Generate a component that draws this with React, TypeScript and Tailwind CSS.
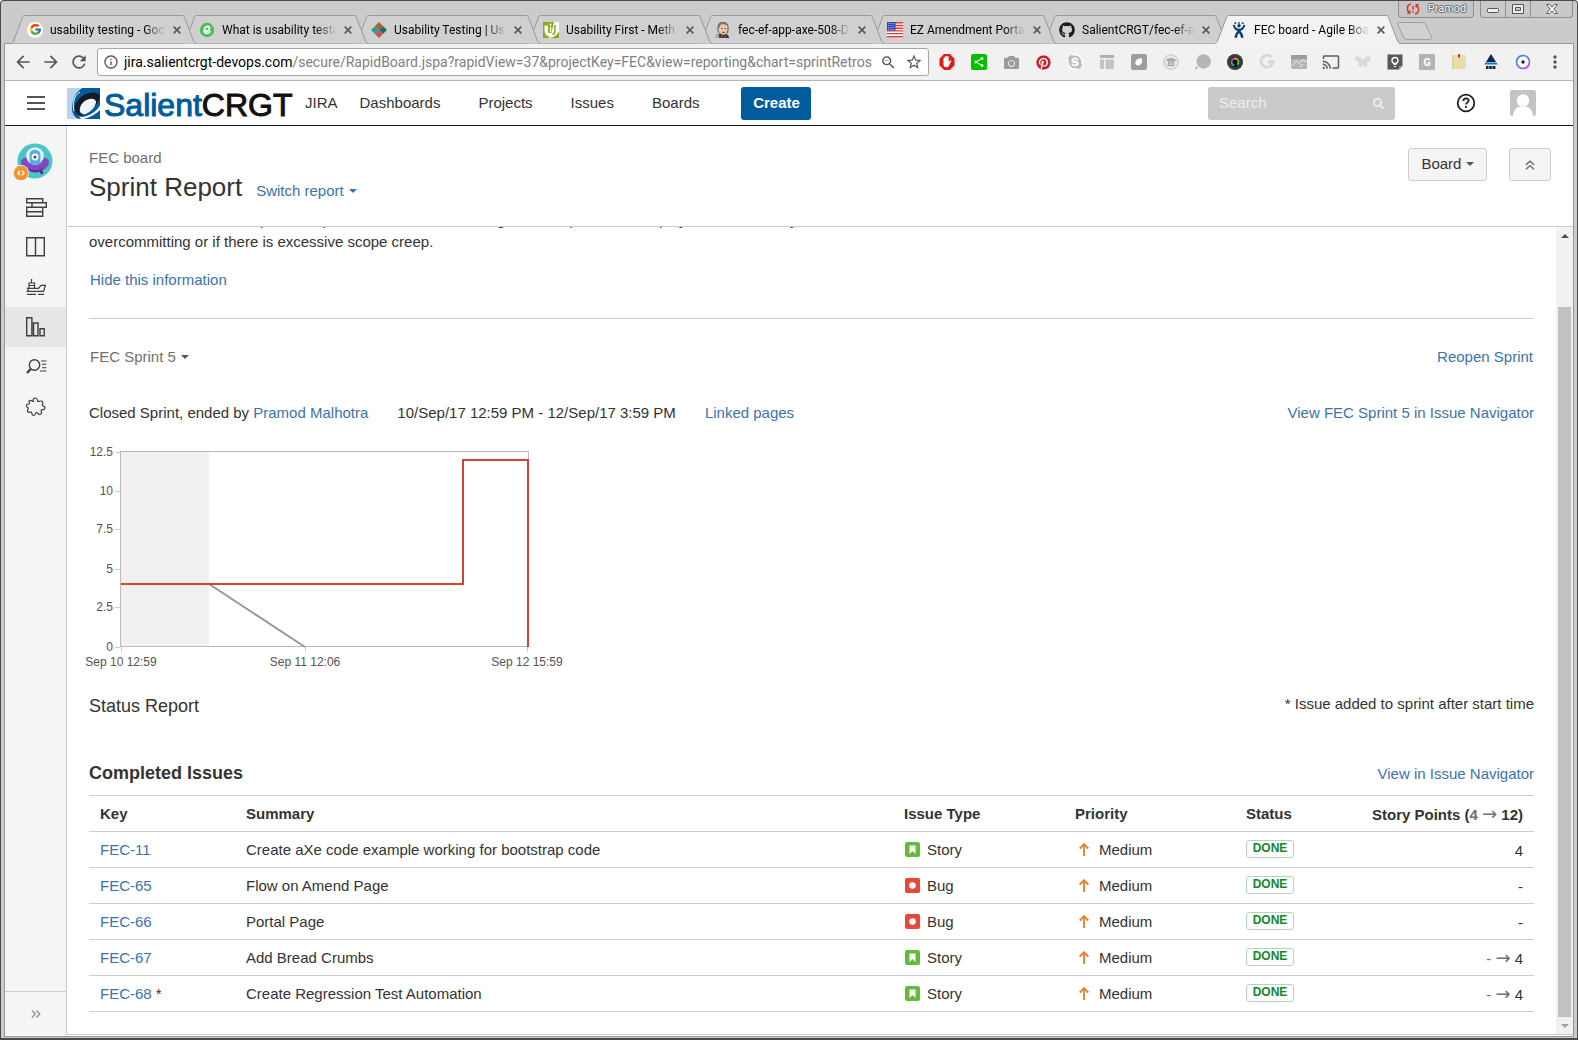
import React from "react";
import { FcGoogle } from "react-icons/fc";
import { FaGithub, FaPinterest, FaSkype, FaCamera, FaSearch } from "react-icons/fa";
import {
  MdArrowBack,
  MdArrowForward,
  MdRefresh,
  MdInfoOutline,
  MdStarBorder,
  MdZoomOut,
  MdCast,
  MdShare,
  MdMoreVert,
} from "react-icons/md";

/* ---------- tab icons ---------- */

const EIcon = () => (
  <svg viewBox="0 0 16 16" className="size-4">
    <circle cx="8" cy="8" r="7.2" fill="#4ebd55" />
    <path d="M5 9.200c3.200.2 5.600-.9 5.600-2.800 0-1.200-.9-1.900-2-1.900-1.900 0-3.300 2-3.300 4 0 1.800 1 2.900 2.600 2.900 1.200 0 2.300-.6 3.100-1.600" fill="none" stroke="#fff" strokeWidth="1.800" strokeLinecap="round" />
  </svg>
);

const DiamondIcon = () => (
  <svg viewBox="0 0 16 16" className="size-4">
    <path d="M8 0l4 4-4 4-4-4z" fill="#a9642c" />
    <path d="M4 4l4 4-4 4-4-4z" fill="#2b9a9a" />
    <path d="M12 4l4 4-4 4-4-4z" fill="#1f6f78" />
    <path d="M8 8l4 4-4 4-4-4z" fill="#c65252" />
  </svg>
);

const UFirstIcon = () => (
  <svg viewBox="0 0 16 16" className="size-4">
    <rect width="16" height="16" fill="#86ab1d" />
    <path d="M11 0h5v10c-1 3-4 5-7 5.500L6 16h-.500L8 13z" fill="#fff" />
    <path d="M16 9v7H7c4-.5 7.500-3 9-7z" fill="#86ab1d" />
    <path d="M3.200 3.500v5c0 2.800 1.500 4.300 4.300 4.300s4.300-1.500 4.300-4.300v-5" fill="none" stroke="#fff" strokeWidth="3.400" />
    <path d="M12 3v5.500c0 2-.8 3.600-2.400 4.200" fill="none" stroke="#86ab1d" strokeWidth="1.500" />
    <path d="M7.500 5v5" stroke="#fff" strokeWidth="1.400" />
    <circle cx="7.500" cy="2.700" r="1.100" fill="#fff" />
  </svg>
);

const JenkinsIcon = () => (
  <svg viewBox="0 0 16 16" className="size-4">
    <path d="M2 16c0-3 2-4.500 6-4.500s6 1.500 6 4.500z" fill="#30384a" />
    <path d="M3 5c0-3 2-5 5-5s5 2 5 5v3c0 3-2 5-4.500 5S3 11 3 8z" fill="#e9c9a8" stroke="#4a3b33" strokeWidth=".8" />
    <path d="M3 5C3 2 5 0 8 0s5 2 5 4c-2-1.500-5-2-7-1.500C5 3.500 5 5 4.500 6z" fill="#7d746c" />
    <path d="M6 6.500h1.500M9.500 6.500H11M7 10c1 .6 2.300.6 3 0" stroke="#4a3b33" strokeWidth=".9" />
    <path d="M6 13l2.500 1.200L11 13v3l-2.500-1.200L6 16z" fill="#c8292b" />
    <path d="M1 16c0-2.500.5-3.500 2-4l1.500 4z" fill="#c9c9c9" stroke="#555" strokeWidth=".5" />
  </svg>
);

const FlagIcon = () => (
  <svg viewBox="0 0 16 16" className="size-4">
    <rect width="16" height="16" fill="#fff" />
    <path d="M0 .8h16M0 3.500h16M0 6.200h16M0 8.900h16M0 11.600h16M0 14.700h16" stroke="#e03c31" strokeWidth="1.400" />
    <rect width="8.500" height="8.500" fill="#2b45b8" />
    <path d="M1 1.500h7M1 3.500h7M1 5.500h7M1 7.300h7" stroke="#fff" strokeWidth=".7" strokeDasharray=".8 1" />
  </svg>
);

const JiraManIcon = () => (
  <svg viewBox="0 0 16 16" className="size-4">
    <g fill="#0f3d73">
      <circle cx="8" cy="3.800" r="1.700" />
      <circle cx="4.300" cy="1.300" r="1" />
      <circle cx="8" cy=".9" r=".9" />
      <circle cx="11.700" cy="1.300" r="1" />
      <path d="M1.800 2.800c.2 3 1.800 5.200 4.800 6.200-1.400 1.500-3 3.700-3.100 6.600l2.500.4c.1-2 .9-3.700 2-5 1.100 1.300 1.900 3 2 5l2.500-.4c-.1-2.900-1.700-5.100-3.100-6.600 3-1 4.600-3.200 4.800-6.200l-2 .1c-.3 2-1.700 3.600-4.200 3.900C5.500 6.500 4.100 4.900 3.800 2.900z" />
    </g>
  </svg>
);

const tabs: { title: string; icon: React.ReactNode; active?: boolean }[] = [
  {
    title: "usability testing - Goo",
    icon: (
      <span className="flex size-4 items-center justify-center rounded-full bg-white">
        <FcGoogle size={13} />
      </span>
    ),
  },
  { title: "What is usability testi", icon: <EIcon /> },
  { title: "Usability Testing | Us", icon: <DiamondIcon /> },
  { title: "Usability First - Meth", icon: <UFirstIcon /> },
  { title: "fec-ef-app-axe-508-D", icon: <JenkinsIcon /> },
  { title: "EZ Amendment Porta", icon: <FlagIcon /> },
  { title: "SalientCRGT/fec-ef-a", icon: <FaGithub size={16} color="#1b1b1b" /> },
  { title: "FEC board - Agile Boa", icon: <JiraManIcon />, active: true },
];

function Tab({ title, icon, active, order }: { title: string; icon: React.ReactNode; active?: boolean; order: number }) {
  return (
    <div
      className="relative -mr-[13px] -mb-px flex h-[29px] w-[185px] shrink-0 items-center pr-[18px] pl-4"
      style={{ zIndex: active ? 20 : 10 - order }}
    >
      <svg viewBox="0 0 185 29" className="absolute inset-0 h-full w-full" aria-hidden="true">
        <path
          d="M0 28.500C1.500 28 2 27 2.500 26L11.500 2.500C12 1 12.500.5 14 .5H171C172.500.5 173 1 173.500 2.500L182.500 26C183 27 183.500 28 185 28.500"
          fill={active ? "#f2f2f2" : "#d0d0d0"}
          stroke="#989898"
        />
        {active && <path d="M1 28.500H184" stroke="#f2f2f2" />}
      </svg>
      <span className="relative flex size-4 shrink-0 items-center justify-center">{icon}</span>
      <button
        type="button"
        className="relative ml-[7px] flex-1 text-left text-xs leading-4 whitespace-nowrap text-black [mask-image:linear-gradient(to_right,black_82%,transparent)]"
      >
        {title}
      </button>
      <button type="button" aria-label={`Close ${title}`} className="relative ml-2 shrink-0">
        <svg viewBox="0 0 8 8" className="size-2">
          <path d="M.7.7l6.600 6.600M7.300.7L.7 7.300" stroke="#5a5a5a" strokeWidth="1.700" />
        </svg>
      </button>
    </div>
  );
}

function WindowControls() {
  return (
    <div className="absolute top-0 right-px flex items-start gap-[6px] text-[11px]">
      <button
        type="button"
        className="flex h-[17px] w-[76px] items-center justify-center gap-2 rounded-b border border-t-0 border-[#8f8f8f] bg-[#c6c6c6] text-white [text-shadow:1px_0_#666,-1px_0_#666,0_1px_#666,0_-1px_#666]"
      >
        <svg viewBox="0 0 14 12" className="h-3 w-[14px]" fill="none" stroke="#d23f31" strokeWidth="1.600">
          <path d="M5 1C2 1.500 1 4 1.500 6.500c.2 1.200.8 2.200 1.800 3M1.200 10.500l2.600-.4V7.500M9 11c3-.5 4-3 3.500-5.500-.2-1.200-.8-2.200-1.800-3M12.800 1.500l-2.600.4v2.600M7 3v3.500M7 8v1.500" />
        </svg>
        Pramod
      </button>
      <div className="flex h-[17px] divide-x divide-[#8f8f8f] rounded-b border border-t-0 border-[#8f8f8f] bg-[#c9c9c9]">
        <button type="button" aria-label="Minimize" className="flex w-[25px] items-center justify-center">
          <svg viewBox="0 0 12 10" className="h-[10px] w-3">
            <rect x=".5" y="4.500" width="11" height="4" rx="1" fill="#eee" stroke="#555" />
          </svg>
        </button>
        <button type="button" aria-label="Restore" className="flex w-[25px] items-center justify-center">
          <svg viewBox="0 0 12 10" className="h-[10px] w-3">
            <path d="M.5.5h11v9H.5zM3.500 3.500v3h5v-3z" fill="#eee" fillRule="evenodd" stroke="#555" />
          </svg>
        </button>
        <button type="button" aria-label="Close window" className="flex w-[41px] items-center justify-center">
          <svg viewBox="0 0 12 10" className="h-[10px] w-3">
            <path d="M.5.5h3L6 3 8.500.5h3L8 5l3.500 4.500h-3L6 7 3.500 9.500h-3L4 5z" fill="#eee" stroke="#555" strokeWidth=".9" />
          </svg>
        </button>
      </div>
    </div>
  );
}

/* ---------- extension icons ---------- */

const extensions: { name: string; icon: React.ReactNode }[] = [
  {
    name: "Ad blocker",
    icon: (
      <svg viewBox="0 0 16 16" className="size-4">
        <path d="M5 0h6l4.500 4.800v6.400L11 16H5L.5 11.200V4.800z" fill="#e01b1b" />
        <path d="M4.500 8.500V4.200c0-.9 1.200-.9 1.200 0V3c0-1 1.300-1 1.300 0v-.6c0-1 1.400-1 1.400 0V3c0-.9 1.300-.9 1.300 0v5l1.200-1.300c.8-.7 1.700 0 1.200.9l-2.300 4.200c-.5 1-1.100 1.500-2.400 1.500-2 0-2.900-1.300-2.900-3z" fill="#fff" />
      </svg>
    ),
  },
  {
    name: "Share",
    icon: (
      <span className="flex size-4 items-center justify-center rounded-[2px] bg-[#00c100]">
        <MdShare size={12} color="#fff" />
      </span>
    ),
  },
  { name: "Screenshot", icon: <FaCamera size={15} color="#9b9b9b" /> },
  { name: "Pinterest", icon: <FaPinterest size={15} color="#cb2027" className="rounded-full bg-white" /> },
  { name: "Skype", icon: <FaSkype size={16} color="#bdbdbd" className="rounded-full bg-white" /> },
  {
    name: "Layout",
    icon: (
      <svg viewBox="0 0 16 16" className="size-4" fill="#c4c4c4">
        <path d="M1 1h14v3H1zM1 5.500h4V15H1zM6.500 5.500H15V15H6.500z" />
        <path d="M1 1h14v3H1z" fill="#b0b0b0" />
      </svg>
    ),
  },
  {
    name: "Drop",
    icon: (
      <svg viewBox="0 0 16 16" className="size-4">
        <rect width="16" height="16" rx="2" fill="#9d9d9d" />
        <path d="M10.800 4.200c1 3-.2 7.300-3.800 7.300-2 0-3-1.500-2.600-3.500C5 5.200 8 3.800 10.800 4.200z" fill="#fff" />
      </svg>
    ),
  },
  {
    name: "Phone",
    icon: (
      <svg viewBox="0 0 16 16" className="size-4" fill="none" stroke="#c4c4c4">
        <circle cx="8" cy="8" r="7.300" fill="#e6e6e6" />
        <path d="M3.500 6.500c1-2.500 8-2.500 9 0l-2 .5-.5-1h-4l-.5 1z" fill="#999" stroke="#999" strokeWidth=".6" />
        <path d="M5 11.500l1-4h4l1 4z" stroke="#999" strokeWidth="1" />
        <circle cx="8" cy="9.500" r=".9" stroke="#999" strokeWidth=".8" />
      </svg>
    ),
  },
  {
    name: "Bubble",
    icon: (
      <svg viewBox="0 0 16 16" className="size-4" fill="#b6b6b6">
        <circle cx="8.700" cy="7.500" r="7.200" />
        <circle cx="1.500" cy="14" r="1.300" />
      </svg>
    ),
  },
  {
    name: "Color picker",
    icon: (
      <svg viewBox="0 0 16 16" className="size-4" fill="none">
        <circle cx="8" cy="8" r="8" fill="#3c3c40" />
        <circle cx="8" cy="8" r="5" fill="#111" />
        <path d="M4.500 8A3.500 3.500 0 0 1 7 4.700" stroke="#b83be0" strokeWidth="1.800" />
        <path d="M7 4.700a3.500 3.500 0 0 1 3.800 1.200" stroke="#f2a51d" strokeWidth="1.800" />
        <path d="M10.800 5.900a3.500 3.500 0 0 1-.6 4.800" stroke="#49c93c" strokeWidth="1.800" />
        <path d="M4.500 8a3.500 3.500 0 0 0 2.800 3.400" stroke="#26a8d8" strokeWidth="1.800" />
      </svg>
    ),
  },
  {
    name: "Google",
    icon: (
      <svg viewBox="0 0 16 16" className="size-4">
        <path d="M12.800 3.500A6 6 0 1 0 14 8H8.500" fill="none" stroke="#d6d6d6" strokeWidth="2.800" />
      </svg>
    ),
  },
  {
    name: "Gallery",
    icon: (
      <svg viewBox="0 0 16 16" className="size-4">
        <path d="M0 1h16v14H1v-1H0z" fill="#b5b5b5" />
        <path d="M0 1h16v4H0z" fill="#9c9c9c" />
        <path d="M1 12l4-5 3 2 4-3 4 2M9 13l3-3" stroke="#dcdcdc" strokeWidth="1.200" fill="none" />
      </svg>
    ),
  },
  { name: "Cast", icon: <MdCast size={18} color="#5f5f5f" className="shrink-0" /> },
  {
    name: "Butterfly",
    icon: (
      <svg viewBox="0 0 16 16" className="size-4" fill="#d9d9d9">
        <path d="M8 6C6 3 3 2 0 2.500c.3 3 1.500 5 4 6-1 1.500-.8 3.500.8 4.500C6.500 13.500 7.500 12 8 10c.5 2 1.500 3.500 3.200 3 1.600-1 1.800-3 .8-4.500 2.500-1 3.700-3 4-6C13 2 10 3 8 6z" />
      </svg>
    ),
  },
  {
    name: "Notes",
    icon: (
      <svg viewBox="0 0 16 16" className="size-4">
        <path d="M.5.500h15V12L12 15.500H.5z" fill="#575757" />
        <path d="M12 15.500V12h3.500z" fill="#9a9a9a" />
        <circle cx="8" cy="6.500" r="3" fill="none" stroke="#fff" strokeWidth="1.300" />
        <path d="M6.500 10.500h3M7 12.500h2" stroke="#fff" strokeWidth="1.200" />
      </svg>
    ),
  },
  {
    name: "Grammar",
    icon: <span className="flex size-4 items-center justify-center bg-[#b3b3b3] text-[11px] leading-none font-bold text-white">G</span>,
  },
  {
    name: "Sticky note",
    icon: (
      <svg viewBox="0 0 16 16" className="size-4">
        <path d="M1 1h14v14H1z" fill="#e9deaa" />
        <path d="M1 15V1h1.500v14z" fill="#ddd09a" />
        <path d="M8 0v3.500" stroke="#c4362e" strokeWidth="2" />
      </svg>
    ),
  },
  {
    name: "aXe",
    icon: (
      <svg viewBox="0 0 16 16" className="size-4">
        <path d="M8 0l5 8H3z" fill="#14284f" />
        <path d="M2.500 8.500h11l1 2h-13z" fill="#0a78c2" />
        <path d="M3 13.500h10" stroke="#14284f" strokeWidth="3" strokeDasharray="2.600 .6" />
      </svg>
    ),
  },
  {
    name: "Ring",
    icon: (
      <svg viewBox="0 0 16 16" className="size-4" fill="none" strokeWidth="1.500">
        <circle cx="8" cy="8" r="6.500" fill="#fff" stroke="#5a6cf0" />
        <path d="M8 1.500A6.500 6.500 0 0 0 1.500 8" stroke="#4a90e8" />
        <path d="M8 14.500A6.500 6.500 0 0 0 14.500 8" stroke="#c05af0" />
        <circle cx="8" cy="8" r="1.700" fill="#222" />
      </svg>
    ),
  },
];

function Toolbar() {
  return (
    <div className="flex h-[37px] shrink-0 items-center border-b border-[#b5b5b5] bg-[#f1f1f1] pr-[10px] pl-2 text-[#555]">
      <div className="flex gap-2">
        <button type="button" aria-label="Back">
          <MdArrowBack size={20} />
        </button>
        <button type="button" aria-label="Forward">
          <MdArrowForward size={20} />
        </button>
        <button type="button" aria-label="Reload">
          <MdRefresh size={20} />
        </button>
      </div>
      <div className="ml-2 flex h-7 min-w-0 flex-1 items-center rounded-[3px] border border-[#a6a6a6] bg-white pr-[5px] pl-[5px]">
        <MdInfoOutline size={16} className="shrink-0" />
        <p className="ml-[5px] min-w-0 flex-1 overflow-hidden text-sm leading-5 whitespace-nowrap text-[#808080]">
          <span className="text-black">jira.salientcrgt-devops.com</span>
          /secure/RapidBoard.jspa?rapidView=37&amp;projectKey=FEC&amp;view=reporting&amp;chart=sprintRetros
        </p>
        <button type="button" aria-label="Zoom" className="ml-[7px] shrink-0">
          <MdZoomOut size={17} />
        </button>
        <button type="button" aria-label="Bookmark" className="ml-2 shrink-0">
          <MdStarBorder size={18} />
        </button>
      </div>
      <div className="ml-[10px] flex shrink-0 gap-4">
        {extensions.map((e) => (
          <button key={e.name} type="button" aria-label={e.name} className="flex size-4 items-center justify-center">
            {e.icon}
          </button>
        ))}
        <button type="button" aria-label="Menu" className="flex size-4 items-center justify-center">
          <MdMoreVert size={20} className="shrink-0" />
        </button>
      </div>
    </div>
  );
}

/* ---------- JIRA header ---------- */

function Logo() {
  return (
    <a href="#home" className="flex h-[31px] w-[226px] shrink-0 items-center">
      <svg viewBox="0 0 33 31" className="h-[31px] w-[33px] shrink-0">
        <rect width="33" height="31" fill="#b9d3ee" />
        <path d="M15 0H33V31H14C8 31 5 26 5 20 5 12 8 5 15 0z" fill="#005c9c" />
        <path d="M0 0H15C7 5 3 12 4 21c.3 4 1.500 7 4 10H0z" fill="#b9d3ee" />
        <path d="M13 4C7 8 5 15 7 23" fill="none" stroke="#fff" strokeWidth="1" />
        <path d="M10 25c-1-8 5-15 12-16 5-.7 8 1.500 7 6-1.500 6-9 12-15 12-2 0-3.500-.7-4-2z" fill="#eef5fb" />
        <path d="M33 7C28 3 20 4 14 9 8 14 6 20 9 25c2 3 6 3 9 1-4 .5-6-2-5-6 1.500-6 8-10 13-9 3 .5 4 3 2 7 4-4 5-8 5-11z" fill="#1a1a1e" />
        <path d="M33 17c-3 6-9 10-17 12l-4-.5 2 2.500h3c7-2 12-5 16-9z" fill="#fff" />
      </svg>
      <span className="ml-1 pt-1 text-[32px] leading-[30px] text-[#005c9c] [-webkit-text-stroke:1px_currentColor]">
        Salient<span className="text-[#111]">CRGT</span>
      </span>
    </a>
  );
}

function Header() {
  return (
    <header className="flex h-[45px] shrink-0 items-center border-b border-[#0d1c33] bg-white pr-[37px] pl-[22px]">
      <button type="button" aria-label="Menu" className="flex w-[18px] flex-col gap-1">
        <span className="h-[2px] bg-[#555]" />
        <span className="h-[2px] bg-[#555]" />
        <span className="h-[2px] bg-[#555]" />
      </button>
      <div className="ml-[22px] flex items-center">
        <Logo />
        <a href="#jira" className="ml-3">
          JIRA
        </a>
      </div>
      <nav className="ml-[22px] flex gap-[38px]">
        <a href="#dashboards">Dashboards</a>
        <a href="#projects">Projects</a>
        <a href="#issues">Issues</a>
        <a href="#boards">Boards</a>
      </nav>
      <button type="button" className="ml-[42px] h-[33px] w-[70px] rounded-[3px] bg-[#005c9c] font-bold text-white">
        Create
      </button>
      <label className="ml-auto flex h-[33px] w-[187px] items-center rounded-[3px] bg-[#cacaca] pr-[11px] pl-[11px]">
        <input
          type="text"
          aria-label="Search"
          placeholder="Search"
          className="w-0 flex-1 bg-transparent outline-none placeholder:text-[#ededed]"
        />
        <FaSearch size={11} color="#f0f0f0" />
      </label>
      <button type="button" aria-label="Help" className="ml-[61px]">
        <svg viewBox="0 0 20 20" className="size-5" fill="none" stroke="#222" strokeWidth="1.800">
          <circle cx="10" cy="10" r="8.300" />
          <path d="M7.400 8c0-3.500 5.200-3.300 5.200-.4 0 2-2.600 2-2.600 4" />
          <path d="M10 13v2" />
        </svg>
      </button>
      <button type="button" aria-label="Profile" className="ml-[34px]">
        <svg viewBox="0 0 26 26" className="size-[26px]">
          <rect width="26" height="26" rx="2" fill="#c4c4c4" />
          <circle cx="13" cy="10.500" r="6.200" fill="#fff" />
          <path d="M3 26c.5-6 4-9 7-9.500h6c3 .5 6.500 3.500 7 9.500z" fill="#fff" />
        </svg>
      </button>
    </header>
  );
}

/* ---------- sidebar ---------- */

const sideItems: { name: string; icon: React.ReactNode; active?: boolean }[] = [
  {
    name: "Backlog",
    icon: (
      <path d="M.7 1.700h16v4h-16zM6 5.700h14.300v4.500H6zM.7 10.200h16v4.500h-16zM.7 14.700h16v4.600h-16z" />
    ),
  },
  { name: "Active sprints", icon: <path d="M.7.700h17.600v18H.7zM9.500.700v18" /> },
  {
    name: "Releases",
    icon: (
      <path d="M.5 14.300h17l2-6h-4.500l-2.500 3H1.500l1 3M3 11V6h5.500v5M5.500 6V2M3 8.500h5.500M1 17.300h9M12 17.300h6" strokeWidth="1.200" />
    ),
  },
  { name: "Reports", icon: <path d="M.7.700h5.200v18H.7zM7.500 6h4.500v12.700H7.500zM14 11.700h4.200v7H14z" />, active: true },
  {
    name: "Issues",
    icon: (
      <>
        <circle cx="8.500" cy="8" r="5.200" />
        <path d="M4.700 12L1 16" strokeWidth="2.400" />
        <path d="M15 4h5.500M16 7.300h4.500M16 10.700h4.500M14 14h6.500" strokeWidth="1.100" />
      </>
    ),
  },
  {
    name: "Add-ons",
    icon: (
      <path
        d="M7.500 4.500C6.500 2.500 8 .8 9.700 1c1.800.3 1.300 2.300 2 3.200 1 .8 2.800-.3 4.300-.2 1.300.3.8 2.700.2 4 .2 1.300 2.300.8 2.800 2.300.3 1.700-1.500 2.500-3 2.200-1.300.2-.9 1.800-.5 2.800.4 1.300-1.600 2.300-2.900 2-1-.4-.9-1.700-2-2-1.400 0-.8 2.300-2.300 3-1.600.5-2.600-1-2.500-2.500-.3-1.400-2.200-.3-3.500-.5-1.500-.5-.8-2.500 0-3.700.2-1.300-1.800-1.300-2-2.800 0-1.600 1.700-1.800 2.700-1.800 1.200-.6-.6-2.200.3-3.300C4.500 2.700 6.500 4.700 7.500 4.500z"
        strokeWidth="1.200"
      />
    ),
  },
];

function ProjectAvatar() {
  return (
    <svg viewBox="0 0 40 38" className="h-[38px] w-10">
      <circle cx="22" cy="18" r="17.500" fill="#47c6c8" />
      <path d="M26 28h4v3h-2z" fill="#4b2a8c" />
      <path d="M8 19c0-4 6-5.500 14-5.500S36 15 36 19s-5 10-14 10S8 23 8 19z" fill="#8149bf" />
      <path d="M14 25c5 3 13 3 17-1-2 4-5 5.500-9 5.500-3 0-6-1-8-4.500z" fill="#5b2fa0" />
      <circle cx="22" cy="13" r="8.800" fill="#eaf6fc" />
      <path d="M16.500 20v-8c0-7 11-7 11 0v8c-3 2-8 2-11 0z" fill="#57aee0" />
      <circle cx="22" cy="14" r="3.400" fill="#fff" />
      <circle cx="22" cy="14" r="1.500" fill="#1b4f8a" />
      <circle cx="8" cy="30" r="8" fill="#f6f6f6" />
      <circle cx="8" cy="30" r="7.300" fill="#f79232" />
      <path d="M7 27.800L4.900 30 7 32.200M9 27.800l2.100 2.200L9 32.200" fill="none" stroke="#fff" strokeWidth="1.300" />
    </svg>
  );
}

function Sidebar() {
  return (
    <aside className="flex w-[62px] shrink-0 flex-col border-r border-[#ccc] bg-[#f5f5f5]">
      <a href="#project" aria-label="Project" className="mt-[17px] mb-[6px] ml-2">
        <ProjectAvatar />
      </a>
      {sideItems.map((s) => (
        <a
          key={s.name}
          href={"#" + s.name}
          aria-label={s.name}
          className={"flex h-10 items-center pl-[21px] " + (s.active ? "bg-[#e6e6e6]" : "")}
        >
          <svg viewBox="0 0 21 20" className="h-5 w-[21px]" fill="none" stroke="#3f3f3f" strokeWidth="1.400">
            {s.icon}
          </svg>
        </a>
      ))}
      <button
        type="button"
        aria-label="Expand sidebar"
        className="mt-auto flex h-11 items-center justify-center border-t border-[#ccc]"
      >
        <svg viewBox="0 0 10 8" className="h-2 w-[10px]" fill="none" stroke="#999" strokeWidth="1.500">
          <path d="M1 .5L4.300 4 1 7.500M5.500.5L8.800 4 5.500 7.500" />
        </svg>
      </button>
    </aside>
  );
}

/* ---------- report ---------- */

const link = "text-[#3b73af]";

const Caret = ({ className }: { className: string }) => (
  <svg viewBox="0 0 8 4" className={"inline-block h-1 w-2 " + className} fill="currentColor">
    <path d="M0 0h8L4 4z" />
  </svg>
);

const yTicks = [
  { label: "12.5", y: 12 },
  { label: "10", y: 51 },
  { label: "7.5", y: 89 },
  { label: "5", y: 129 },
  { label: "2.5", y: 167 },
  { label: "0", y: 207 },
];

const xTicks = [
  { label: "Sep 10 12:59", x: 40 },
  { label: "Sep 11 12:06", x: 224 },
  { label: "Sep 12 15:59", x: 446 },
];

function BurndownChart() {
  return (
    <svg viewBox="0 0 490 232" className="mt-4 -ml-2 block h-[232px] w-[490px]" role="img" aria-label="Sprint burndown chart">
      <rect x="40" y="12" width="88" height="195" fill="#f1f1f1" />
      <rect x="39.500" y="11.500" width="408" height="195" fill="none" stroke="#bbb" />
      {yTicks.map((t) => (
        <g key={t.label}>
          <path d={`M34 ${t.y}.5H39`} stroke="#ccc" />
          <text x="32" y={t.y + 4} textAnchor="end" fontSize="12" fill="#545454">
            {t.label}
          </text>
        </g>
      ))}
      {xTicks.map((t) => (
        <g key={t.label}>
          <path d={`M${t.x}.5 207V212`} stroke="#ccc" />
          <text x={t.x} y="226" textAnchor="middle" fontSize="12" fill="#545454">
            {t.label}
          </text>
        </g>
      ))}
      <path d="M40 144H128L224 207" fill="none" stroke="#999" strokeWidth="2" />
      <path d="M40 144H382V20H447V207" fill="none" stroke="#d04437" strokeWidth="2" />
    </svg>
  );
}

const StoryIcon = () => (
  <svg viewBox="0 0 15 15" className="mb-[3px] size-[15px]">
    <rect width="15" height="15" rx="2" fill="#63ba3c" />
    <path d="M4.500 3.500h6v8.500l-3-3-3 3z" fill="#fff" />
  </svg>
);

const BugIcon = () => (
  <svg viewBox="0 0 15 15" className="mb-[3px] size-[15px]">
    <rect width="15" height="15" rx="2" fill="#e5493a" />
    <circle cx="7.500" cy="7.500" r="3.300" fill="#fff" />
  </svg>
);

const MediumIcon = () => (
  <svg viewBox="0 0 10 13" className="mb-[3px] h-[13px] w-[10px]" fill="none" stroke="#ea7d24" strokeWidth="1.800">
    <path d="M5 13V1.500M.7 5.500L5 1.200l4.300 4.300" />
  </svg>
);

const Arrow = () => (
  <span className="font-['DejaVu_Sans',sans-serif] text-lg leading-4 font-normal">→</span>
);

const issues = [
  { key: "FEC-11", summary: "Create aXe code example working for bootstrap code", type: "Story", from: "", points: "4" },
  { key: "FEC-65", summary: "Flow on Amend Page", type: "Bug", from: "", points: "-" },
  { key: "FEC-66", summary: "Portal Page", type: "Bug", from: "", points: "-" },
  { key: "FEC-67", summary: "Add Bread Crumbs", type: "Story", from: "-", points: "4" },
  { key: "FEC-68", summary: "Create Regression Test Automation", type: "Story", from: "-", points: "4", added: true },
];

function IssueTable() {
  return (
    <table className="mt-[9px] w-full table-fixed border-t border-[#ccc] text-left">
      <colgroup>
        <col className="w-[146px]" />
        <col />
        <col className="w-[171px]" />
        <col className="w-[171px]" />
        <col className="w-[100px]" />
        <col className="w-[198px]" />
      </colgroup>
      <thead>
        <tr className="h-9 border-b border-[#ccc]">
          <th className="px-[11px] pt-[2px]">Key</th>
          <th className="px-[11px] pt-[2px]">Summary</th>
          <th className="pt-[2px] pl-[10px]">Issue Type</th>
          <th className="pt-[2px] pl-[10px]">Priority</th>
          <th className="pt-[2px] pl-[10px]">Status</th>
          <th className="px-[11px] pt-[2px] text-right leading-5">
            Story Points (
            <span className="text-[#707070]">
              4 <Arrow />
            </span>{" "}
            12)
          </th>
        </tr>
      </thead>
      <tbody>
        {issues.map((i) => (
          <tr key={i.key} className="h-9 border-b border-[#ccc]">
            <td className="px-[11px] pt-[2px]">
              <a href={"#" + i.key} className={link}>
                {i.key}
              </a>
              {i.added && " *"}
            </td>
            <td className="px-[11px] pt-[2px]">{i.summary}</td>
            <td className="pt-[2px] pl-[11px]">
              <span className="flex items-center gap-[7px]">
                {i.type === "Story" ? <StoryIcon /> : <BugIcon />}
                {i.type}
              </span>
            </td>
            <td className="pt-[2px] pl-[14px]">
              <span className="flex items-center gap-[10px]">
                <MediumIcon />
                Medium
              </span>
            </td>
            <td className="pb-px pl-[10px]">
              <span className="flex h-[18px] w-12 items-center justify-center rounded-[3px] border border-[#b2d8b9] pb-[2px] text-xs leading-4 font-bold text-[#14892c]">
                DONE
              </span>
            </td>
            <td className="px-[11px] pt-[2px] text-right leading-5">
              {i.from && (
                <span className="text-[#707070]">
                  {i.from} <Arrow />{" "}
                </span>
              )}
              {i.points}
            </td>
          </tr>
        ))}
      </tbody>
    </table>
  );
}

function Report() {
  return (
    <div className="min-w-0 flex-1 overflow-hidden pr-[22px] pl-[22px]">
      <p className="-mt-[18px] max-w-[860px] leading-[22px]">
        Understand the work completed or pushed back to the backlog in each sprint. This helps you determine if your team is
        overcommitting or if there is excessive scope creep.
      </p>
      <div className="mt-4 pl-px leading-[22px]">
        <a href="#hide" className={link}>
          Hide this information
        </a>
      </div>
      <hr className="mt-[27px] border-[#ccc]" />
      <div className="mt-[27px] flex justify-between px-px leading-[22px]">
        <button type="button" className="text-[#707070]">
          FEC Sprint 5 <Caret className="mb-[3px] ml-px text-[#555]" />
        </button>
        <a href="#reopen" className={link}>
          Reopen Sprint
        </a>
      </div>
      <div className="mt-[34px] flex justify-between leading-[22px]">
        <p className="flex gap-[29px]">
          <span>
            Closed Sprint, ended by{" "}
            <a href="#pramod" className={link}>
              Pramod Malhotra
            </a>
          </span>
          <span>10/Sep/17 12:59 PM - 12/Sep/17 3:59 PM</span>
          <a href="#linked" className={link}>
            Linked pages
          </a>
        </p>
        <a href="#navigator" className={link}>
          View FEC Sprint 5 in Issue Navigator
        </a>
      </div>
      <BurndownChart />
      <div className="mt-[22px] flex justify-between">
        <h2 className="text-lg leading-6">Status Report</h2>
        <p className="leading-5">* Issue added to sprint after start time</p>
      </div>
      <div className="mt-[43px] mb-[10px] flex items-center justify-between">
        <h3 className="text-lg leading-6 font-bold">Completed Issues</h3>
        <a href="#completed" className={"pt-[2px] leading-[22px] " + link}>
          View in Issue Navigator
        </a>
      </div>
      <IssueTable />
    </div>
  );
}

function Scrollbar() {
  return (
    <div className="flex w-[17px] shrink-0 flex-col items-center bg-[#f1f1f1]">
      <div className="flex h-[80px] items-start pt-[7px] text-[#505050]">
        <Caret className="rotate-180" />
      </div>
      <div className="w-[13px] flex-1 bg-[#c1c1c1]" />
      <div className="flex h-[17px] items-center text-[#a0a0a0]">
        <Caret className="" />
      </div>
    </div>
  );
}

export default function App() {
  return (
    <div className="flex h-screen flex-col overflow-hidden rounded-t border border-b-2 border-[#4b494d] bg-[#cbcbcb] px-[3px] pb-px font-['Liberation_Sans',Arial,sans-serif] text-[15px] text-[#333]">
      <div className="relative flex h-[43px] shrink-0 items-end border-b border-[#989898] pl-[7px] font-[Roboto,'Segoe_UI',sans-serif]">
        {tabs.map((t, i) => (
          <Tab key={t.title} title={t.title} icon={t.icon} active={t.active} order={i} />
        ))}
        <button type="button" aria-label="New tab" className="mb-[3px] ml-[10px]">
          <svg viewBox="0 0 36 18" className="h-[18px] w-9">
            <path d="M2 .5h24c1 0 2 .5 2.500 1.500l6 13c.5 1.500 0 2.500-1.500 2.500H9.500c-1 0-2-.5-2.500-1.500L.8 2.500C.3 1.200.8.500 2 .5z" fill="#d0d0d0" stroke="#a0a0a0" />
          </svg>
        </button>
        <WindowControls />
      </div>
      <div className="flex min-h-0 flex-1 flex-col border-x border-b border-[#989898] bg-white pb-px">
        <div className="flex flex-col font-[Roboto,'Segoe_UI',sans-serif]">
          <Toolbar />
        </div>
        <Header />
        <div className="flex min-h-0 flex-1">
          <Sidebar />
          <main className="flex min-w-0 flex-1 flex-col border-b border-[#ccc]">
            <div className="flex h-[101px] shrink-0 items-start justify-between border-b border-[#ccc] pt-[22px] pr-[22px] pl-[22px]">
              <div>
                <p className="leading-5 text-[#707070]">FEC board</p>
                <div className="flex items-baseline gap-[14px]">
                  <h1 className="text-[26px] leading-[38px]">Sprint Report</h1>
                  <button type="button" className={link}>
                    Switch report <Caret className="mb-[2px] ml-px" />
                  </button>
                </div>
              </div>
              <div className="flex gap-[22px]">
                <button type="button" className="h-[33px] w-[79px] rounded-[3px] border border-[#ccc] bg-[#f5f5f5]">
                  Board <Caret className="mb-[3px] text-[#555]" />
                </button>
                <button
                  type="button"
                  aria-label="Collapse header"
                  className="flex h-[33px] w-[42px] items-center justify-center rounded-[3px] border border-[#ccc] bg-[#f5f5f5]"
                >
                  <svg viewBox="0 0 10 10" className="size-[10px]" fill="none" stroke="#666" strokeWidth="1.400">
                    <path d="M1 4.800L5 1.200l4 3.600M1 9.200l4-3.600 4 3.600" />
                  </svg>
                </button>
              </div>
            </div>
            <div className="flex min-h-0 flex-1">
              <Report />
              <Scrollbar />
            </div>
          </main>
        </div>
      </div>
    </div>
  );
}
